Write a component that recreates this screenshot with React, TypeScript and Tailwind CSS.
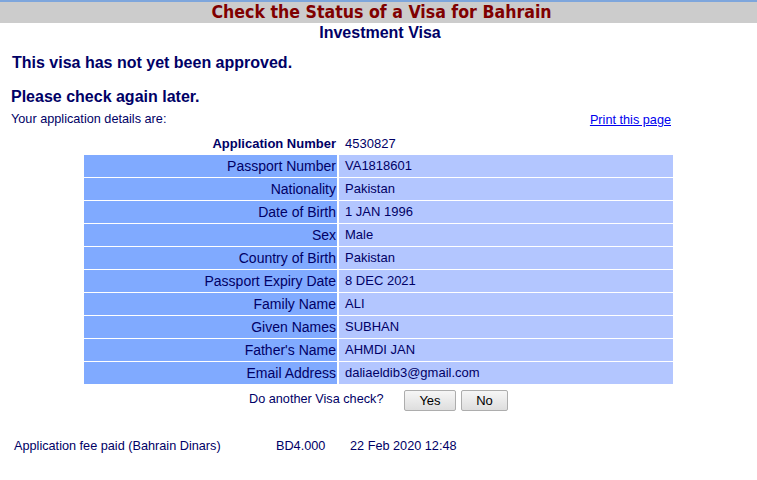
import React from "react";

const rows: [string, string][] = [
  ["Passport Number", "VA1818601"],
  ["Nationality", "Pakistan"],
  ["Date of Birth", "1 JAN 1996"],
  ["Sex", "Male"],
  ["Country of Birth", "Pakistan"],
  ["Passport Expiry Date", "8 DEC 2021"],
  ["Family Name", "ALI"],
  ["Given Names", "SUBHAN"],
  ["Father's Name", "AHMDI JAN"],
  ["Email Address", "daliaeldib3@gmail.com"],
];

export default function App() {
  return (
    <div className="w-[757px] h-[480px] bg-white overflow-hidden text-[#000066]" style={{ fontFamily: "'Liberation Sans', Arial, sans-serif" }}>
      <div className="h-[2px] bg-[#7ea6dc]" />
      <div className="h-[21px] bg-[#cccccc] flex items-center justify-center pl-[6px]">
        <span className="text-[#800000] font-bold text-[17.6px] leading-none" style={{ fontFamily: "'DejaVu Sans Condensed', 'DejaVu Sans', sans-serif" }}>
          Check the Status of a Visa for Bahrain
        </span>
      </div>
      <div className="text-center font-bold text-[16px] leading-[18px] mt-px pl-[3px]">Investment Visa</div>
      <div className="pl-[12px] mt-[12px] font-bold text-[16px] leading-[18px]">This visa has not yet been approved.</div>
      <div className="pl-[11px] mt-[16px] font-bold text-[16px] leading-[18px]">Please check again later.</div>
      <div className="flex justify-between pl-[11px] pr-[86px] mt-[6px] text-[12.7px] leading-[15px]">
        <span>Your application details are:</span>
        <span className="text-[#0000ee] underline mt-[1px]">Print this page</span>
      </div>
      <div className="ml-[84px] mt-[5px] w-[589px] grid grid-cols-[253px_334px] gap-x-[2px] gap-y-px text-[14px] leading-[16px]">
        <div className="h-[21px] flex items-center justify-end font-bold text-[13px] pr-px">Application Number</div>
        <div className="h-[21px] flex items-center pl-[6px] text-[13px]">4530827</div>
        {rows.map(([k, v]) => (
          <React.Fragment key={k}>
            <div className="h-[22px] bg-[#80aaff] flex items-center justify-end pr-px">{k}</div>
            <div className="h-[22px] bg-[#b3c6ff] flex items-center pl-[6px] text-[13px]">{v}</div>
          </React.Fragment>
        ))}
      </div>
      <div className="flex items-start ml-[249px] mt-[5px] text-[12.7px]">
        <span className="leading-[15px] mt-[3px] w-[155px]">Do another Visa check?</span>
        <button className="mt-[1px] w-[52px] h-[21px] border border-[#adadad] rounded-[2px] bg-gradient-to-b from-[#f6f6f6] to-[#dedede] text-[13px] text-black leading-none">Yes</button>
        <button className="ml-[5px] mt-[1px] w-[47px] h-[21px] border border-[#adadad] rounded-[2px] bg-gradient-to-b from-[#f6f6f6] to-[#dedede] text-[13px] text-black leading-none">No</button>
      </div>
      <div className="flex ml-[14px] mt-[28px] text-[12.7px] leading-[15px]">
        <span className="w-[262px]">Application fee paid (Bahrain Dinars)</span>
        <span className="w-[74px]">BD4.000</span>
        <span>22 Feb 2020 12:48</span>
      </div>
    </div>
  );
}
